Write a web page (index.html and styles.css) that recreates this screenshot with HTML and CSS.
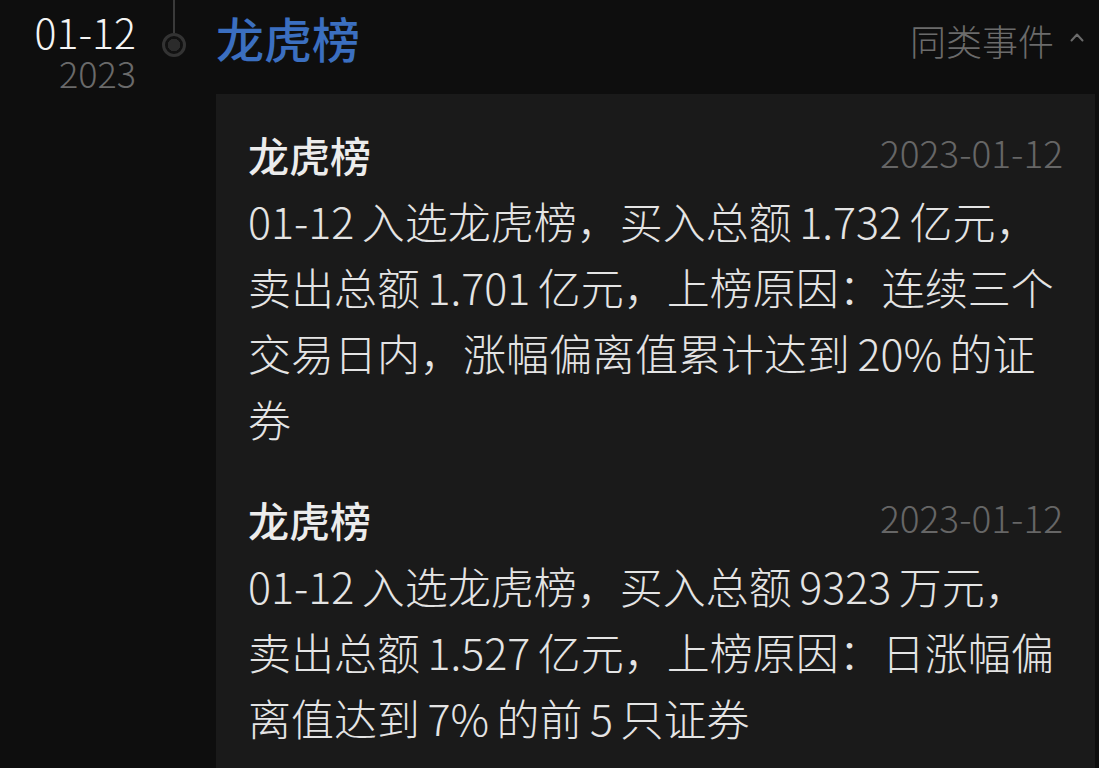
FILE: index.html
```html
<!DOCTYPE html>
<html lang="zh-CN">
<head>
<meta charset="utf-8">
<title>龙虎榜</title>
<link rel="stylesheet" href="styles.css">
</head>
<body>
<main class="timeline">
  <section class="event">
    <header class="event-head">
      <div class="event-date">
        <span class="event-day">01-12</span>
        <span class="event-year">2023</span>
      </div>
      <div class="event-node">
        <span class="node-line"></span>
        <span class="node-dot"></span>
      </div>
      <h2 class="event-title">龙虎榜</h2>
      <button class="similar" type="button">
        <span>同类事件</span>
        <svg class="chevron" width="14" height="10" viewBox="0 0 14 10" aria-hidden="true">
          <polyline points="1.5,8.5 7,2.5 12.5,8.5" fill="none" stroke="currentColor" stroke-width="2" stroke-linecap="round" stroke-linejoin="round"/>
        </svg>
      </button>
    </header>

    <div class="event-card">
      <article class="record">
        <div class="record-head">
          <h3 class="record-title">龙虎榜</h3>
          <time class="record-time" datetime="2023-01-12">2023-01-12</time>
        </div>
        <p class="record-text">01-12 入选龙虎榜，买入总额 1.732 亿元，卖出总额 1.701 亿元，上榜原因：连续三个交易日内，涨幅偏离值累计达到 20% 的证券</p>
      </article>
      <article class="record">
        <div class="record-head">
          <h3 class="record-title">龙虎榜</h3>
          <time class="record-time" datetime="2023-01-12">2023-01-12</time>
        </div>
        <p class="record-text">01-12 入选龙虎榜，买入总额 9323 万元，卖出总额 1.527 亿元，上榜原因：日涨幅偏离值达到 7% 的前 5 只证券</p>
      </article>
    </div>
  </section>
</main>
</body>
</html>
```

FILE: styles.css
```css
html,
body {
  margin: 0;
  padding: 0;
  height: 100%;
}

body {
  background: #0e0e0e;
  color: #e4e4e4;
  font-family: "Noto Sans CJK SC", "Noto Sans", sans-serif;
  overflow: hidden;
}

.timeline {
  display: flex;
  flex-direction: column;
}

/* ---- event header: date, timeline node, title, related link ---- */
.event-head {
  display: flex;
  align-items: flex-start;
  height: 94px;
  padding-right: 15px;
}

.event-date {
  width: 136px;
  display: flex;
  flex-direction: column;
  align-items: flex-end;
  padding-top: 10px;
}

.event-day {
  font-size: 41px;
  line-height: 42px;
  font-weight: 300;
  color: #f4f4f4;
}

.event-year {
  font-size: 36px;
  line-height: 40px;
  font-weight: 300;
  color: #6a6a6a;
}

.event-node {
  width: 24px;
  margin: 0 30px 0 26px;
  display: flex;
  flex-direction: column;
  align-items: center;
}

.node-line {
  width: 2px;
  height: 33px;
  background: #3a3a3a;
}

.node-dot {
  box-sizing: border-box;
  width: 24px;
  height: 24px;
  border-radius: 50%;
  border: 3px solid #333333;
  background: radial-gradient(circle, #2b2b2b 0 6px, #111111 6.5px);
}

.event-title {
  flex: 1;
  margin: 0;
  padding-top: 7px;
  font-size: 48px;
  line-height: 60px;
  font-weight: 500;
  color: #3b6fc0;
}

.similar {
  display: flex;
  align-items: center;
  gap: 16px;
  margin-top: 12px;
  padding: 0;
  border: 0;
  background: none;
  font-family: inherit;
  font-size: 36px;
  line-height: 56px;
  font-weight: 300;
  color: #6b6b6b;
}

.chevron {
  display: block;
  margin-top: -6px;
}

/* ---- card with the day's records ---- */
.event-card {
  margin: 0 4px 0 216px;
  padding: 27px 32px 40px;
  background: #1a1a1a;
  display: flex;
  flex-direction: column;
  gap: 35px;
}

.record-head {
  display: flex;
  align-items: center;
  justify-content: space-between;
}

.record-title {
  margin: 0;
  font-size: 41px;
  line-height: 66px;
  font-weight: 500;
  color: #ececec;
}

.record-time {
  font-size: 37px;
  line-height: 40px;
  margin-top: -4px;
  font-weight: 300;
  color: #666666;
}

.record-text {
  margin: 0;
  font-size: 43px;
  line-height: 66px;
  font-weight: 300;
  word-spacing: -2px;
  color: #e4e4e4;
}
```
